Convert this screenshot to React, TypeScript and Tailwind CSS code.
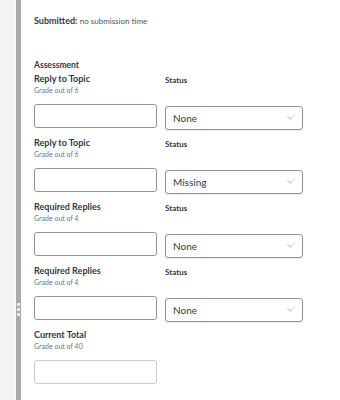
import { ChevronDown } from "lucide-react";

type Row = { title: string; grade: string; status?: string };

const rows: Row[] = [
  { title: "Reply to Topic", grade: "Grade out of 6", status: "None" },
  { title: "Reply to Topic", grade: "Grade out of 6", status: "Missing" },
  { title: "Required Replies", grade: "Grade out of 4", status: "None" },
  { title: "Required Replies", grade: "Grade out of 4", status: "None" },
];

function GradeRow({ title, grade, status }: Row) {
  return (
    <div className="grid h-[64px] grid-cols-[123px_138px] gap-x-[8px]">
      <div className="flex flex-col">
        <div className="text-[9px] font-bold leading-[12px] text-[#2d3b45]">{title}</div>
        <div className="text-[7px] leading-[10px] text-[#6b7780]">{grade}</div>
        <div className="mt-[9px] h-[24px] rounded-[3px] border border-[#8b969e] bg-white" />
      </div>
      {status && (
        <div className="flex flex-col pt-[2px]">
          <div className="text-[8px] font-bold leading-[11px] text-[#2d3b45]">Status</div>
          <div className="mt-[20px] flex h-[24px] items-center justify-between rounded-[3px] border border-[#8b969e] bg-white pl-[7px] pr-[7px] shadow-[0_1px_1px_rgba(0,0,0,0.08)]">
            <span className="text-[10px] text-[#2d3b45]">{status}</span>
            <ChevronDown className="h-[10px] w-[10px] text-[#6b7780]" strokeWidth={1.5} />
          </div>
        </div>
      )}
    </div>
  );
}

export default function App() {
  return (
    <div className="flex h-[400px] w-[340px] overflow-hidden bg-white font-['Lato','Liberation_Sans',sans-serif]">
      <div className="w-[16px] border-r border-[#fbfbfb] bg-[#f2f3f3]" />
      <div className="relative w-[5px] bg-[#a7aaad]">
        <div className="absolute left-[1px] top-[303px] flex flex-col gap-[2px]">
          <span className="h-[3px] w-[3px] bg-[#e6ecf5]" />
          <span className="h-[3px] w-[3px] bg-[#e6ecf5]" />
          <span className="h-[3px] w-[3px] bg-[#e6ecf5]" />
        </div>
      </div>
      <div className="flex flex-1 flex-col pl-[13px] pt-[15px]">
        <div className="text-[9px] leading-[12px] text-[#2d3b45]">
          <span className="font-bold">Submitted:</span>{" "}
          <span className="text-[8px] text-[#4a5560]">no submission time</span>
        </div>
        <div className="mt-[31px] text-[8.5px] font-bold leading-[15px] text-[#2d3b45]">Assessment</div>
        {rows.map((r, i) => (
          <GradeRow key={i} {...r} />
        ))}
        <div className="flex w-[123px] flex-col">
          <div className="text-[9px] font-bold leading-[12px] text-[#2d3b45]">Current Total</div>
          <div className="text-[7px] leading-[10px] text-[#6b7780]">Grade out of 40</div>
          <div className="mt-[9px] h-[24px] rounded-[3px] border border-[#c7cdd1] bg-white" />
        </div>
      </div>
    </div>
  );
}
